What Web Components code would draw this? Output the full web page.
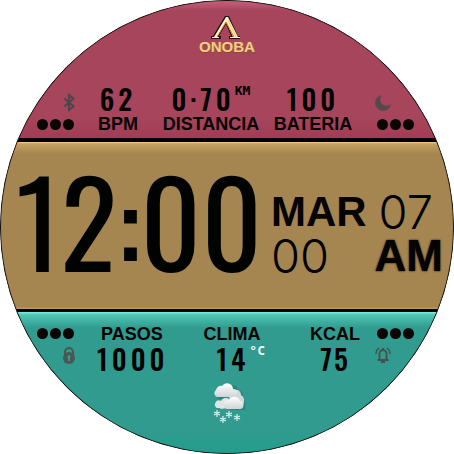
<!DOCTYPE html>
<html lang="es">
<head>
<meta charset="utf-8">
<title>Onoba</title>
<style>
body { margin: 0; background: #fff; font-family: "Liberation Sans", Arial, sans-serif; color: #050303; }
.top { --tracks: 37fr 88fr 98fr 106fr 11fr 37fr; }
.bottom { --tracks: 37fr 23fr 98fr 74fr 24fr 84fr 37fr; }
.top side-status:last-of-type { grid-column: 6; }
.bottom metric-item:nth-of-type(1) { grid-column: 3; }
.bottom metric-item:nth-of-type(2) { grid-column: 4; }
.bottom metric-item:nth-of-type(3) { grid-column: 6; }
</style>
</head>
<body>
<watch-face>
  <brand-mark slot="top"></brand-mark>
  <metric-row slot="top" class="top">
    <side-status icon="bluetooth"></side-status>
    <metric-item label="BPM">62</metric-item>
    <metric-item label="DISTANCIA" unit="KM">0·70</metric-item>
    <metric-item label="BATERIA">100</metric-item>
    <side-status icon="moon"></side-status>
  </metric-row>
  <time-panel slot="middle" time="12:00" month="MAR" day="07" seconds="00" period="AM"></time-panel>
  <metric-row slot="bottom" class="bottom">
    <side-status icon="lock" flip></side-status>
    <metric-item label="PASOS" flip align="start">1000</metric-item>
    <metric-item label="CLIMA" unit="°C" flip light align="end">14</metric-item>
    <metric-item label="KCAL" flip compact>75</metric-item>
    <side-status icon="bell" flip></side-status>
  </metric-row>
  <snow-icon slot="bottom"></snow-icon>
</watch-face>
<script>
const define = (name, html) => customElements.define(name, class extends HTMLElement {
  connectedCallback() {
    if (this.shadowRoot) return;
    this.attachShadow({ mode: 'open' }).innerHTML = typeof html === 'function' ? html(this) : html;
  }
});

define('watch-face', `<style>
:host { display: grid; box-sizing: border-box; width: 100%; aspect-ratio: 1; overflow: hidden;
  border: 1px solid #140d08; border-radius: 50%; background: #000;
  grid-template-rows: 137fr 4px 167fr 3px 141fr; }
section { display: flex; flex-direction: column; min-height: 0; }
.top { background: linear-gradient(#c75f7b, #a6455c 10px, #a6455c 85%, #a23c54); justify-content: space-between; padding: 15px 0 4px; }
.middle { grid-row: 3; justify-content: flex-end;
  background: linear-gradient(#efcb88, #c4a062 2px, #a58550 12px, #a58550 calc(100% - 8px), #a8844c calc(100% - 2px), #c9a468); }
.bottom { grid-row: 5; padding: 12px 0 28px; justify-content: space-between;
  background: linear-gradient(#78f0dc, #50c4b4 3px, #309b8e 16px, #309b8e 85%, #229d8f); }
</style>
<section class="top"><slot name="top"></slot></section>
<section class="middle"><slot name="middle"></slot></section>
<section class="bottom"><slot name="bottom"></slot></section>`);

define('brand-mark', `<style>
:host { display: flex; flex-direction: column; align-items: center; }
svg { width: 32px; height: 24px; display: block; }
span { font-weight: 700; font-size: 15px; line-height: 14px; color: #f5cd8c; text-shadow: 0 1px 0 #8a4a20, 1px 0 0 #a86a38; }
</style>
<svg viewBox="1 0 32 24" aria-hidden="true">
<path d="M15 0h4l9 20h2v3H19v-3h2L16 8 9 20h2v3H1v-3h2z" fill="#2a0d10"/>
<path d="M16 1h2l10 20h2v1H20v-1h3L16 6 7 21h2v1H2v-1h2z" fill="#fff3d8"/>
<path d="M18 4l8 17" stroke="#ffd668" stroke-width="1.500" fill="none"/>
<path d="M16 6l8 15M16 6L7 21" stroke="#e07f1c" stroke-width="1" fill="none"/>
</svg><span>ONOBA</span>`);

define('metric-row', `<style>
:host { display: grid; grid-template-columns: var(--tracks); padding: 0 39px 0 36px; }
</style><slot></slot>`);

define('metric-item', el => {
  const unit = el.getAttribute('unit');
  return `<style>
:host { display: flex; flex-direction: column; align-items: center; white-space: nowrap; }
:host([flip]) { flex-direction: column-reverse; }
.label { font-weight: 700; font-size: 18px; line-height: 20px; }
.value { display: flex; align-items: flex-start; font-family: Oswald, "Roboto Condensed", sans-serif;
  font-weight: 500; font-size: 28px; line-height: 30px; letter-spacing: 4px; color: #000; }
:host([align=start]) { align-items: flex-start; }
:host([align=start]) .label { padding-left: 4px; }
:host([align=end]) .value { align-self: flex-end; padding-right: 4px; }
:host([compact]) .value { letter-spacing: 2px; }
.unit { font: 700 13px/14px "DejaVu Sans Mono", monospace; letter-spacing: normal; }
:host([light]) .unit { color: #fff; }
</style><div class="value"><span><slot></slot></span>${unit ? `<span class="unit">${unit}</span>` : ''}</div>
<div class="label">${el.getAttribute('label')}</div>`;
});

const icons = {
  bluetooth: '<path d="M3.500 4.500l9 8L8 16V1l4.500 3.500-9 8" fill="none" stroke="#4c4648" stroke-width="2"/>',
  moon: '<path d="M7 1A8 8 0 1 0 16 10A6 6 0 1 1 7 1z" fill="#55494c"/>',
  lock: '<path d="M4 8V5a4 4 0 0 1 8 0v3" fill="none" stroke="#4b5653" stroke-width="2"/><circle cx="8" cy="11" r="6" fill="#4b5653"/><path d="M8 8a2 2 0 0 1 1 3v3H7v-3a2 2 0 0 1 1-3z" fill="#309b8e"/>',
  bell: '<path d="M2.500 13h11M4.500 13V7a3.500 4 0 0 1 7 0v6M8 1v2" fill="none" stroke="#45504d" stroke-width="1.800"/><path d="M6 14h4v2H6z" fill="#45504d"/><path d="M4 1Q1 3 1 7M12 1Q15 3 15 7" fill="none" stroke="#45504d" stroke-width="1.400"/>'
};
define('side-status', el => `<style>
:host { display: flex; flex-direction: column; gap: 8px; align-self: end; padding-bottom: 4px; }
:host([flip]) { flex-direction: column-reverse; align-self: start; padding: 4px 0 0; }
svg { width: 11px; height: 17px; align-self: flex-end; overflow: visible; }
:host([icon=moon]) svg, :host([icon=bell]) svg { align-self: flex-start; }
.dots { display: flex; justify-content: space-between; }
i { width: 11px; height: 11px; border-radius: 50%; background: #0b0606; }
</style><svg viewBox="2 0 11 17" aria-hidden="true">${icons[el.getAttribute('icon')]}</svg>
<div class="dots"><i></i><i></i><i></i></div>`);

define('time-panel', el => {
  const a = n => el.getAttribute(n);
  return `<style>
:host { display: flex; align-items: flex-end; justify-content: space-between; padding: 0 10px 31px 15px; white-space: nowrap; }
time { font: 400 118px/118px Oswald, "Roboto Condensed", sans-serif; color: #000300; }
.date { display: grid; grid-template-columns: auto auto; column-gap: 8px; }
.date > * { line-height: 44px; }
b { font-size: 42px; }
.period { font-size: 44px; justify-self: end; text-shadow: 0 0 2px #050303; }
.thin { font-family: Inter, sans-serif; font-weight: 300; font-size: 47px; color: #000300; }
.day { padding-left: 4px; }
</style><time>${a('time')}</time>
<div class="date"><b>${a('month')}</b><span class="thin day">${a('day')}</span><span class="thin">${a('seconds')}</span><b class="period">${a('period')}</b></div>`;
});

define('snow-icon', `<style>
:host { display: block; align-self: center; }
svg { display: block; width: 36px; height: 42px; }
</style>
<svg viewBox="-3 0 36 42" aria-hidden="true">
<defs><linearGradient id="g" x2="0" y2="1"><stop offset="0" stop-color="#fff"/><stop offset="1" stop-color="#cfd5d6"/></linearGradient></defs>
<g fill="#1d5f58" opacity=".35" transform="translate(1 1)"><path d="M6 15h20a4 4 0 0 0 0-8 8 8 0 0 0-14-3 5 5 0 0 0-7 4 4 4 0 0 0 1 7zM17 26h13a4 4 0 0 0 2-8 6 6 0 0 0-12 0z"/></g>
<path d="M9 26a4 4 0 0 1 0-7 5 5 0 0 1 9-2 7 7 0 0 1 3-10c5-1 8 1 8 5 4 2 4 8 1 11z" fill="#d3d8da"/>
<path d="M5 25h12v-8a5 5 0 0 0-8 1 4 4 0 0 0-4 7z" fill="#e2e5e6"/>
<path d="M5 14h16a4 4 0 0 0 0-8 6 6 0 0 0-11-3 5 5 0 0 0-6 4 4 4 0 0 0 1 7z" fill="url(#g)"/>
<path d="M15 26h12a4 4 0 0 0 1-8 6 6 0 0 0-11-1 4 4 0 0 0-2 9z" fill="url(#g)"/>
<g stroke="#e4efee" stroke-width="1.200"><path id="f" d="M5 27v7M2 29l6 3M2 32l6-3"/><use href="#f" x="6" y="6"/><use href="#f" x="12" y="1"/><use href="#f" x="20" y="4"/></g>
</svg>`);
</script>
</body>
</html>
